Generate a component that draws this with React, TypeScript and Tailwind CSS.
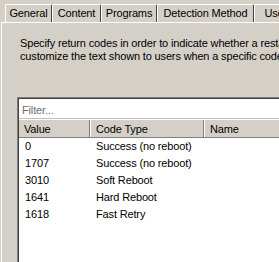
export default function App() {
  const tabs: [string, number][] = [
    ["General", 47],
    ["Content", 49],
    ["Programs", 56],
    ["Detection Method", 97],
    ["User Experience", 100],
  ];
  const rows: [string, string][] = [
    ["0", "Success (no reboot)"],
    ["1707", "Success (no reboot)"],
    ["3010", "Soft Reboot"],
    ["1641", "Hard Reboot"],
    ["1618", "Fast Retry"],
  ];
  return (
    <div className="w-[279px] h-[262px] overflow-hidden bg-[#d4d0c8] text-[11px] leading-[13px] tracking-[-0.15px] text-black font-['Liberation_Sans',Arial,sans-serif]">
      <div className="w-[600px]">
        <div className="flex pl-[5px] pt-[4px] h-[22px]">
          {tabs.map(([t, w]) => (
            <div
              key={t}
              style={{ width: w }}
              className="h-[18px] shrink-0 border-t border-l border-white border-r border-r-[#404040] rounded-t-[2px] pt-[2px] text-center whitespace-nowrap"
            >
              {t}
            </div>
          ))}
        </div>
        <div className="ml-[1px] border-l border-t border-white h-[240px]">
          <div className="pl-[18px] pt-[14px] whitespace-nowrap">
            <div>Specify return codes in order to indicate whether a restart is required. You can also</div>
            <div>customize the text shown to users when a specific code is returned.</div>
          </div>
          <div className="ml-[15px] mt-[34px] border-l border-t border-[#808080]">
            <div className="border-l border-t border-[#404040] bg-white">
              <div className="h-[20px] pl-[3px] pt-[5px] text-[#6d6d6d] border-b border-[#c0c0c0]">Filter...</div>
              <div className="flex h-[19px] bg-[#d4d0c8] border-t border-white border-b border-b-[#808080]">
                <div className="w-[71px] shrink-0 pl-[5px] pt-[3px] border-r border-[#808080]">Value</div>
                <div className="w-[114px] shrink-0 pl-[6px] pt-[3px] border-r border-[#808080] shadow-[inset_1px_0_0_#ffffff]">Code Type</div>
                <div className="w-[200px] shrink-0 pl-[6px] pt-[3px] border-r border-[#808080] shadow-[inset_1px_0_0_#ffffff]">Name</div>
              </div>
              <div className="h-[130px]">
                {rows.map(([v, c], i) => (
                  <div key={i} className="flex h-[17px] items-center">
                    <div className="w-[71px] shrink-0 pl-[6px]">{v}</div>
                    <div className="w-[114px] shrink-0 pl-[6px] whitespace-nowrap">{c}</div>
                  </div>
                ))}
              </div>
            </div>
          </div>
        </div>
      </div>
    </div>
  );
}
